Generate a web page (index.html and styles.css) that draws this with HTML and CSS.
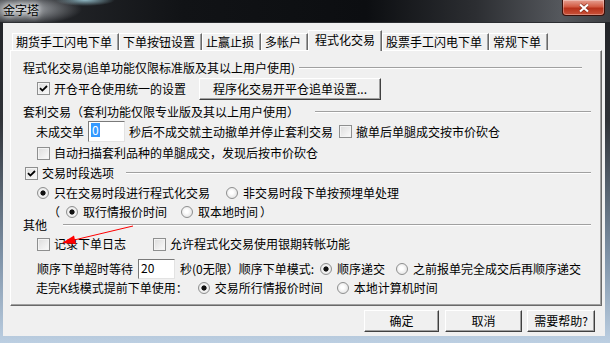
FILE: index.html
```
<!DOCTYPE html>
<html lang="zh-CN">
<head>
  <meta charset="UTF-8">
  <title>金字塔</title>
  <link rel="stylesheet" href="styles.css">
</head>
<body>
<div class="window">
  <div class="titlebar">
    <span class="title">金字塔</span>
    <span class="close">
      <svg width="12" height="10" viewBox="0 0 12 10">
        <path d="M2 1.5L10 8.5M10 1.5L2 8.5" stroke="#5a1c12" stroke-opacity=".6" stroke-width="3.6"/>
        <path d="M2 1.5L10 8.5M10 1.5L2 8.5" stroke="#fff" stroke-width="2.2"/>
      </svg>
    </span>
  </div>

  <div class="client">
    <div class="tabs">
      <div class="tab">期货手工闪电下单</div>
      <div class="tab">下单按钮设置</div>
      <div class="tab">止赢止损</div>
      <div class="tab">多帐户</div>
      <div class="tab active">程式化交易</div>
      <div class="tab">股票手工闪电下单</div>
      <div class="tab">常规下单</div>
    </div>

    <div class="panel">
      <div class="row head head-program">
        <span>程式化交易(追单功能仅限标准版及其以上用户使用)</span><span class="rule"></span>
      </div>
      <div class="row sub row-setup">
        <span class="opt"><span class="check on"><svg width="11" height="11" viewBox="0 0 11 11"><path d="M2 5.2l2.4 2.4L9 3" fill="none" stroke="#000" stroke-width="1.8"/></svg></span>开仓平仓使用统一的设置</span>
        <span class="btn btn-setup">程序化交易开平仓追单设置...</span>
      </div>

      <div class="row head head-arb">
        <span>套利交易（套利功能仅限专业版及其以上用户使用）</span><span class="rule"></span>
      </div>
      <div class="row sub row-field">
        <span>未成交单</span>
        <span class="field field-arb"><span class="sel">0</span></span>
        <span class="after-field">秒后不成交就主动撤单并停止套利交易</span>
        <span class="opt opt-cancel"><span class="check"></span>撤单后单腿成交按市价砍仓</span>
      </div>
      <div class="row sub row-scan">
        <span class="opt"><span class="check"></span>自动扫描套利品种的单腿成交，发现后按市价砍仓</span>
      </div>

      <div class="row head head-session">
        <span class="opt"><span class="check on"><svg width="11" height="11" viewBox="0 0 11 11"><path d="M2 5.2l2.4 2.4L9 3" fill="none" stroke="#000" stroke-width="1.8"/></svg></span>交易时段选项</span><span class="rule"></span>
      </div>
      <div class="row sub row-session">
        <span class="opt"><span class="radio on"></span>只在交易时段进行程式化交易</span>
        <span class="opt opt-off">
          <span class="radio"></span>非交易时段下单按预埋单处理</span>
      </div>
      <div class="row sub row-time">
        <span class="paren">（</span>
        <span class="opt opt-quote"><span class="radio on"></span>取行情报价时间</span>
        <span class="opt opt-local"><span class="radio"></span>取本地时间</span>
        <span class="paren-close">）</span>
      </div>

      <div class="row head head-other">
        <span>其他</span><span class="rule"></span>
      </div>
      <div class="row sub row-log">
        <span class="opt"><span class="check"></span>记录下单日志</span>
        <span class="opt opt-bank"><span class="check"></span>允许程式化交易使用银期转帐功能</span>
      </div>
      <div class="row sub row-wait">
        <span>顺序下单超时等待</span>
        <span class="field field-wait">20</span>
        <span class="after-field">秒(0无限）顺序下单模式:</span>
        <span class="opt opt-seq"><span class="radio on"></span>顺序递交</span>
        <span class="opt opt-full"><span class="radio"></span>之前报单完全成交后再顺序递交</span>
      </div>
      <div class="row sub row-kline">
        <span>走完K线模式提前下单使用：</span>
        <span class="opt opt-exch"><span class="radio on"></span>交易所行情报价时间</span>
        <span class="opt opt-pc"><span class="radio"></span>本地计算机时间</span>
      </div>
    </div>

    <div class="buttons">
      <span class="btn btn-ok">确定</span>
      <span class="btn btn-cancel">取消</span>
      <span class="btn btn-help">需要帮助?</span>
    </div>
  </div>

  <svg class="arrow" width="610" height="343" viewBox="0 0 610 343">
    <line x1="133" y1="226" x2="72" y2="240.5" stroke="#f00" stroke-width="1"/>
    <polygon points="62,243 74,235.5 76,244" fill="#f00"/>
  </svg>
</div>
</body>
</html>
```

FILE: styles.css
```
body {
  margin: 0;
  font-family: "Noto Sans CJK SC", "Noto Sans", sans-serif;
  font-size: 12px;
  color: #000;
}

.window {
  position: relative;
  width: 610px;
  height: 343px;
  overflow: hidden;
  background: linear-gradient(to bottom, #1e2024 0%, #2f3237 35%, #7f93a8 75%, #bccfe2 100%);
}

/* title bar */
.titlebar {
  height: 22px;
  display: flex;
  align-items: flex-start;
  background:
    radial-gradient(ellipse 60px 16px at 22px 9px, rgba(190, 194, 199, .95), rgba(190, 194, 199, 0)),
    radial-gradient(ellipse 30px 6px at 85px 0, rgba(170, 220, 235, .8), rgba(170, 220, 235, 0)),
    linear-gradient(to right, #2a2c30 0, #111316 30%, #0c0e11 60%, #2c2e32 78%, #55585d 92%, #3c3e42 100%);
}
.title {
  padding: 3px 0 0 3px;
  line-height: 13px;
  text-shadow: 0 0 5px #fff, 0 0 9px #fff;
}
.close {
  width: 43px;
  height: 16px;
  margin-left: auto;
  margin-right: 5px;
  box-sizing: border-box;
  border: 1px solid #3b0f08;
  border-top: none;
  border-radius: 0 0 4px 4px;
  background: linear-gradient(#e6a092 0, #d25a42 45%, #b7311a 55%, #c9533a 100%);
  box-shadow: inset 0 0 0 1px rgba(255, 255, 255, .3);
  display: flex;
  align-items: center;
  justify-content: center;
}

/* dialog body */
.client {
  margin: 0 5px 0 3px;
  height: 313px;
  background: #f0f0f0;
  border-top: 1px solid #2b2d31;
}

.tabs {
  display: flex;
  align-items: flex-end;
  height: 19px;
  margin-top: 8px;
  padding-left: 9px;
}
.tab {
  height: 17px;
  box-sizing: border-box;
  padding: 0 6px 0 3px;
  border-top: 1px solid #fff;
  border-left: 1px solid #fff;
  border-right: 1px solid #696969;
  box-shadow: inset -1px 0 #a0a0a0;
  display: flex;
  align-items: center;
  line-height: 14px;
  white-space: nowrap;
}
.tab.active {
  position: relative;
  z-index: 2;
  height: 21px;
  margin-bottom: -1px;
  padding: 0 6px 2px;
  background: #f0f0f0;
}

.panel {
  width: 592px;
  height: 256px;
  margin-left: 7px;
  box-sizing: border-box;
  border-top: 1px solid #fff;
  border-left: 1px solid #fff;
  border-right: 1px solid #696969;
  border-bottom: 1px solid #696969;
  box-shadow: inset -1px -1px #a0a0a0;
  padding: 9px 10px 0 12px;
}

.row {
  display: flex;
  align-items: center;
  height: 16px;
  line-height: 14px;
  white-space: nowrap;
}
.sub { padding-left: 14px; }

.rule {
  flex: 1;
  border-top: 1px solid #a0a0a0;
  border-bottom: 1px solid #fff;
}
.head-program .rule { margin: 0 9px 0 4px; }
.head-arb { margin-top: 4px; }
.head-arb .rule { margin-left: 16px; }
.head-session { margin-top: 4px; padding-left: 2px; }
.head-session .rule { margin-left: 12px; }
.head-other { height: 12px; }
.head-other .rule { margin-left: 16px; }

.row-setup { height: 23px; margin-top: 1px; }
.row-field { height: 21px; margin-top: 1px; padding-left: 13px; }
.row-scan { margin-top: 3px; }
.row-session { margin-top: 4px; }
.row-time { height: 14px; margin-top: 4px; }
.row-log { margin-top: 5px; }
.row-wait { height: 20px; margin-top: 7px; }
.row-kline { margin-top: 1px; padding-left: 13px; }

/* controls */
.opt {
  display: flex;
  align-items: center;
  gap: 4px;
}
.check {
  width: 13px;
  height: 13px;
  box-sizing: border-box;
  border: 1px solid #8e8f8f;
  background: linear-gradient(135deg, #dcdcdc, #fbfbfb);
  box-shadow: inset 0 0 0 1px #f4f4f4;
  display: flex;
  align-items: center;
  justify-content: center;
  flex: none;
}
.radio {
  width: 12px;
  height: 12px;
  box-sizing: border-box;
  border: 1px solid #8e8f8f;
  border-radius: 50%;
  background: radial-gradient(circle at 45% 45%, #fff 20%, #d9d9d9 100%);
  margin-right: 1px;
  flex: none;
}
.radio.on {
  background: radial-gradient(circle, #111 0 2.2px, #f6f6f6 3px, #d9d9d9 100%);
}

.field {
  height: 21px;
  width: 37px;
  box-sizing: border-box;
  border: 1px solid;
  border-color: #7a7a7a #e3e3e3 #e3e3e3 #7a7a7a;
  background: #fff;
  padding: 1px 0 0 2px;
  margin: 0 4px;
  line-height: 14px;
}
.field-wait { height: 20px; margin: 0 5px; }
.sel {
  display: inline-block;
  background: #3399ff;
  color: #fff;
  padding: 0 1px;
}

.opt-cancel { margin-left: 6px; }
.opt-off { margin-left: 16px; }
.paren { margin-left: 11px; }
.opt-quote { margin-left: 6px; }
.opt-local { margin-left: 14px; }
.paren-close { margin-left: 2px; }
.opt-bank { margin-left: 27px; }
.opt-seq { margin-left: 6px; }
.opt-full { margin-left: 11px; }
.opt-exch { margin-left: 10px; }
.opt-pc { margin-left: 14px; }

.btn {
  height: 22px;
  box-sizing: border-box;
  border: 1px solid;
  border-color: #fff #404040 #404040 #fff;
  box-shadow: inset -1px -1px #a0a0a0;
  background: #f0f0f0;
  display: flex;
  align-items: center;
  justify-content: center;
  line-height: 14px;
}
.btn-setup { width: 182px; margin-left: 13px; }

.buttons {
  display: flex;
  justify-content: flex-end;
  margin: 4px 10px 0 0;
}
.btn-ok { width: 75px; }
.btn-cancel { width: 77px; margin-left: 6px; }
.btn-help { width: 68px; margin-left: 5px; }

.arrow {
  position: absolute;
  left: 0;
  top: 0;
  pointer-events: none;
}
```
